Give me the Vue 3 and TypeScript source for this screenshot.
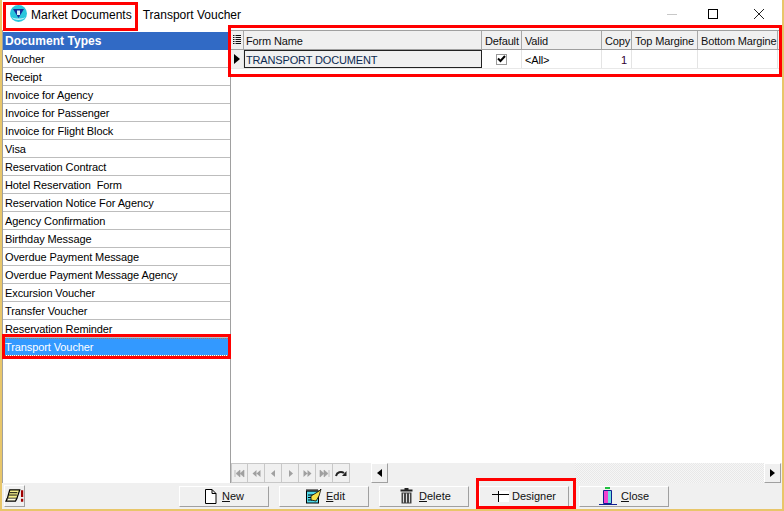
<script setup lang="ts">
const docTypes = [
  'Voucher',
  'Receipt',
  'Invoice for Agency',
  'Invoice for Passenger',
  'Invoice for Flight Block',
  'Visa',
  'Reservation Contract',
  'Hotel Reservation  Form',
  'Reservation Notice For Agency',
  'Agency Confirmation',
  'Birthday Message',
  'Overdue Payment Message',
  'Overdue Payment Message Agency',
  'Excursion Voucher',
  'Transfer Voucher',
  'Reservation Reminder',
  'Transport Voucher',
]
const selected = 'Transport Voucher'
</script>

<template>
  <div class="win">
    <header class="titlebar">
      <svg class="logo" width="17" height="17" viewBox="0 0 17 17">
        <circle cx="8.5" cy="8.5" r="8.5" fill="#29c6dc" />
        <path d="M1.5 12 C4 16 13 16 15.5 12 C12 14 5 14 1.5 12 Z" fill="#c8f4f8" />
        <path d="M3 4 H14 L8.5 13 Z" fill="#14309a" />
        <path d="M7 5.5 H10 V10 H7 Z" fill="#dff6fa" />
      </svg>
      <span class="app-name">Market Documents</span>
      <span class="doc-name">Transport Voucher</span>
      <div class="winbtns">
        <svg width="46" height="30" viewBox="0 0 46 30"><path d="M23 14.5 H33" stroke="#c8c8c8" /></svg>
        <svg width="46" height="30" viewBox="0 0 46 30"><rect x="18.5" y="9.5" width="9" height="9" fill="none" stroke="#000" /></svg>
        <svg width="46" height="30" viewBox="0 0 46 30"><path d="M18 9 L28 19 M28 9 L18 19" stroke="#222" fill="none" /></svg>
      </div>
    </header>

    <main class="body">
      <aside class="types">
        <div class="types-head">Document Types</div>
        <div
          v-for="t in docTypes"
          :key="t"
          class="type-row"
          :class="{ sel: t === selected }"
        >{{ t }}</div>
      </aside>

      <section class="gridwrap">
        <div class="grid">
          <div class="g-row g-head">
            <div class="c c-ind">
              <svg width="8" height="10" viewBox="0 0 8 10"><path d="M0 .5H1.5M2.5 .5H8M0 2.5H1.5M2.5 2.5H8M0 4.5H1.5M2.5 4.5H8M0 6.5H1.5M2.5 6.5H8M0 8.5H1.5M2.5 8.5H8" stroke="#111" /></svg>
            </div>
            <div class="c c-name">Form Name</div>
            <div class="c c-def">Default</div>
            <div class="c c-valid">Valid</div>
            <div class="c c-copy">Copy</div>
            <div class="c c-top">Top Margine</div>
            <div class="c c-bot">Bottom Margine</div>
          </div>
          <div class="g-row g-data">
            <div class="c c-ind ind-cell">
              <svg width="6" height="10" viewBox="0 0 6 10"><path d="M0 0 L6 5 L0 10 Z" fill="#000" /></svg>
            </div>
            <div class="c c-name cur">TRANSPORT DOCUMENT</div>
            <div class="c c-def center">
              <span class="check">
                <svg width="9" height="8" viewBox="0 0 9 8"><path d="M1 3.5 L3.5 6 L8 1" fill="none" stroke="#000" stroke-width="2" /></svg>
              </span>
            </div>
            <div class="c c-valid">&lt;All&gt;</div>
            <div class="c c-copy num">1</div>
            <div class="c c-top"></div>
            <div class="c c-bot"></div>
          </div>
        </div>
        <div class="spacer"></div>
        <div class="gridfoot">
          <div class="navbtns">
            <span v-for="n in 6" :key="n" class="nav">
              <svg width="11" height="9" viewBox="0 0 11 9">
                <path v-if="n === 1" d="M1 1V8M6 1 L2 4.5 L6 8ZM10 1 L6 4.5 L10 8Z" fill="#a0a0a0" stroke="#a0a0a0" stroke-width=".6" />
                <path v-else-if="n === 2" d="M5.5 1 L1.5 4.5 L5.5 8ZM9.5 1 L5.5 4.5 L9.5 8Z" fill="#a0a0a0" />
                <path v-else-if="n === 3" d="M7 1 L3 4.5 L7 8Z" fill="#a0a0a0" />
                <path v-else-if="n === 4" d="M4 1 L8 4.5 L4 8Z" fill="#a0a0a0" />
                <path v-else-if="n === 5" d="M1.5 1 L5.5 4.5 L1.5 8ZM5.5 1 L9.5 4.5 L5.5 8Z" fill="#a0a0a0" />
                <path v-else d="M1 1 L5 4.5 L1 8ZM5 1 L9 4.5 L5 8ZM10 1V8" fill="#a0a0a0" stroke="#a0a0a0" stroke-width=".6" />
              </svg>
            </span>
            <span class="nav">
              <svg width="12" height="9" viewBox="0 0 12 9"><path d="M1 7 C2 3 6 2 9 4" fill="none" stroke="#222" stroke-width="2" /><path d="M7 7 H11.5 V2 Z" fill="#222" /></svg>
            </span>
          </div>
          <div class="gap"></div>
          <div class="hscroll">
            <span class="arrow"><svg width="5" height="8" viewBox="0 0 5 8"><path d="M5 0 L0 4 L5 8Z" fill="#000" /></svg></span>
            <span class="thumb"></span>
            <span class="track"></span>
            <span class="arrow"><svg width="5" height="8" viewBox="0 0 5 8"><path d="M0 0 L5 4 L0 8Z" fill="#000" /></svg></span>
          </div>
        </div>
      </section>
    </main>

    <footer class="toolbar">
      <button class="mini">
        <svg width="20" height="18" viewBox="0 0 20 18">
          <path d="M5 2.5 H15.5 L12.5 11.5 H2.5 Z" fill="#f6f08c" stroke="#000" stroke-width="1.3" />
          <path d="M5 5.5 H13 M4.2 8 H12.5" stroke="#000" />
          <path d="M2.5 11.5 L1 14.5 H11 L12.5 11.5" fill="#fffde0" stroke="#000" stroke-width="1.3" />
          <path d="M18 3 V10 M18 12 V15" stroke="#a00000" stroke-width="2.4" />
        </svg>
      </button>
      <div class="actions">
        <button class="btn b-new">
          <svg width="13" height="15" viewBox="0 0 13 15"><path d="M1.5 .5 H8 L12 4.5 V14.5 H1.5 Z M8 .5 V4.5 H12" fill="#fff" stroke="#000" /></svg>
          <span class="lbl"><u>N</u>ew</span>
        </button>
        <button class="btn b-edit">
          <svg width="18" height="16" viewBox="0 0 18 16">
            <rect x="1.5" y="3" width="12" height="12" fill="#4fd8e8" stroke="#000" />
            <path d="M2 1 V3.5 M4 1 V3.5 M6 1 V3.5 M8 1 V3.5 M10 1 V3.5 M12 1 V3.5" stroke="#000" />
            <path d="M3 7 H8 M3 9.5 H7 M3 12 H7" stroke="#000" />
            <path d="M6 8 L11 5 L14 3 L16 1 L14 8 L11 13 L6 12 Z" fill="#f6e24a" stroke="#000" stroke-width=".8" />
          </svg>
          <span class="lbl"><u>E</u>dit</span>
        </button>
        <button class="btn b-del">
          <svg width="13" height="16" viewBox="0 0 13 16">
            <path d="M4.5 0 H8.5 V1.5 H12.5 V3.5 H.5 V1.5 H4.5 Z" fill="#222" />
            <path d="M1.5 4.5 H11.5 V15.5 H1.5 Z" fill="#444" />
            <path d="M3.5 5.5 V14.5 M6.5 5.5 V14.5 M9.5 5.5 V14.5" stroke="#ddd" />
          </svg>
          <span class="lbl"><u>D</u>elete</span>
        </button>
        <button class="btn b-des">
          <svg width="17" height="11" viewBox="0 0 17 11"><path d="M7 0 H17 V3 H7 Z M7 4 H17 V11 H7 Z" fill="#fff" /><path d="M0 3.5 H17 M6.5 0 V11" stroke="#000" fill="none" /></svg>
          <span class="lbl">Designer</span>
        </button>
        <button class="btn b-close">
          <svg width="18" height="18" viewBox="0 0 18 18">
            <rect x="6" y="0" width="5" height="2" fill="#20c040" />
            <path d="M4.5 3.5 H12.5 V16.5 H4.5 Z" fill="#f040d0" stroke="#102090" />
            <rect x="9" y="4" width="3" height="12" fill="#70e0e0" />
            <path d="M0 17.5 H18" stroke="#102090" />
          </svg>
          <span class="lbl"><u>C</u>lose</span>
        </button>
      </div>
    </footer>

    <!-- red callouts drawn over the screenshot -->
    <div class="mark m-title"></div>
    <div class="mark m-grid"></div>
    <div class="mark m-sel"></div>
    <div class="mark m-des"></div>
  </div>
</template>

<style>
html, body { margin: 0; background: #fff; }
</style>

<style scoped>
.win {
  position: relative;
  width: 784px;
  height: 511px;
  box-sizing: border-box;
  display: flex;
  flex-direction: column;
  background: #fff;
  border-left: 2px solid #e8c66a;
  border-right: 2px solid #e8c66a;
  border-bottom: 2px solid #e8c66a;
  font-family: "Liberation Sans", Arial, sans-serif;
  font-size: 11px;
  letter-spacing: -.1px;
  color: #000;
  overflow: hidden;
}
.titlebar {
  height: 30px;
  flex: none;
  display: flex;
  align-items: center;
  padding-left: 8px;
  font-size: 12px;
  letter-spacing: 0;
}
.logo { margin-right: 4px; margin-top: -3px; }
.app-name { margin-left: 0; }
.doc-name { margin-left: 11px; }
.winbtns { margin-left: auto; display: flex; }
.winbtns svg { display: block; }

.body { flex: 1; min-height: 0; display: flex; }
.types {
  width: 229px;
  flex: none;
  border-right: 1px solid #a0a0a0;
  border-left: 1px solid #a0a0a0;
  box-sizing: border-box;
  padding-top: 2px;
}
.types-head {
  height: 18px;
  line-height: 18px;
  background: #316ac5;
  color: #fff;
  font-size: 12px;
  font-weight: 700;
  padding-left: 2px;
  letter-spacing: .05px;
}
.type-row {
  height: 18px;
  line-height: 19px;
  box-sizing: border-box;
  border-bottom: 1px solid #bdbdbd;
  padding-left: 2px;
  white-space: pre;
  overflow: hidden;
}
.type-row.sel {
  background: #3399ff;
  color: #fff;
  outline: 1px dotted #a08060;
  outline-offset: -1px;
  border-bottom-color: #fff;
}

.gridwrap { flex: 1; min-width: 0; display: flex; flex-direction: column; }
.grid { overflow: hidden; }
.g-row { display: flex; }
.g-head {
  height: 20px;
  background: #f0f0f0;
  border-top: 1px solid #a0a0a0;
  border-bottom: 1px solid #a0a0a0;
  box-sizing: border-box;
}
.g-data { height: 19px; border-bottom: 1px solid #e8e8e8; box-sizing: border-box; }
.c {
  flex: none;
  box-sizing: border-box;
  padding: 0 2px;
  line-height: 20px;
  white-space: nowrap;
  overflow: hidden;
  border-right: 1px solid #e4e4e4;
  letter-spacing: -.15px;
}
.g-head .c { border-right: 1px solid #a8a8a8; color: #111; }
.c-ind { width: 13px; padding: 0 2px; display: flex; align-items: center; justify-content: center; }
.c-name { width: 238px; }
.c-def { width: 40px; padding-left: 3px; }
.c-valid { width: 80px; padding-left: 3px; }
.c-copy { width: 30px; padding-left: 3px; }
.c-top { width: 66px; padding-left: 3px; }
.c-bot { width: 80px; padding-left: 3px; }
.ind-cell { background: #f0f0f0; }
.cur {
  background: #f0f0f0;
  border: 1px solid #222;
  line-height: 18px;
  padding-left: 1px;
  color: #0c2a50;
}
.center { display: flex; align-items: center; justify-content: center; padding: 0; }
.check {
  width: 11px;
  height: 11px;
  box-sizing: border-box;
  border: 1px solid #9a9a9a;
  background: #fff;
  display: flex;
  align-items: center;
  justify-content: center;
}
.num { text-align: right; padding-right: 4px; color: #300030; }
.spacer { flex: 1; }
.gridfoot { height: 20px; flex: none; display: flex; background: #f0f0f0; padding-right: 1px; }
.navbtns { display: flex; width: 120px; flex: none; }
.nav {
  width: 17px;
  box-sizing: border-box;
  display: flex;
  align-items: center;
  justify-content: center;
  border: 1px solid #c8c8c8;
  border-left: 0;
  background: #f0f0f0;
}
.nav:first-child { border-left: 1px solid #c8c8c8; }
.gap { width: 20px; flex: none; }
.hscroll { flex: 1; display: flex; }
.arrow {
  width: 17px;
  flex: none;
  background: #f0f0f0;
  border: 1px solid #fff;
  border-right-color: #a0a0a0;
  border-bottom-color: #a0a0a0;
  box-sizing: border-box;
  display: flex;
  align-items: center;
  justify-content: center;
}
.thumb { width: 187px; flex: none; background: #f0f0f0; }
.track { flex: 1; background: repeating-conic-gradient(#f6f6f6 0 25%, #e8e8e8 0 50%) 0 0 / 2px 2px; }

.toolbar {
  height: 26px;
  flex: none;
  display: flex;
  align-items: center;
  background: #f0f0f0;
  padding-left: 2px;
}
.mini {
  width: 21px;
  height: 22px;
  padding: 0;
  border: 1px solid #fff;
  border-right-color: #a0a0a0;
  border-bottom-color: #a0a0a0;
  background: #f0f0f0;
  display: flex;
  align-items: center;
  justify-content: center;
}
.actions { display: flex; gap: 10px; margin-left: 154px; }
.btn {
  width: 90px;
  height: 21px;
  padding: 0;
  border: 1px solid #fff;
  border-right: 1px solid #a0a0a0;
  border-bottom: 1px solid #a0a0a0;
  background: #f0f0f0;
  display: flex;
  align-items: center;
  font: inherit;
  color: #111;
}
.b-new { padding-left: 24px; gap: 5px; }
.b-edit { padding-left: 25px; gap: 3px; }
.b-del { padding-left: 20px; gap: 6px; }
.b-des { padding-left: 12px; gap: 3px; }
.b-close { padding-left: 19px; gap: 4px; }
.lbl { line-height: 14px; }
.mark {
  position: absolute;
  box-sizing: border-box;
  border: 3px solid #f00;
  pointer-events: none;
}
.m-title { left: 1px; top: 2px; width: 135px; height: 29px; }
.m-grid { left: 226px; top: 25px; width: 554px; height: 52px; }
.m-sel { left: 0; top: 334px; width: 229px; height: 25px; }
.m-des { left: 474px; top: 478px; width: 100px; height: 31px; }
</style>
